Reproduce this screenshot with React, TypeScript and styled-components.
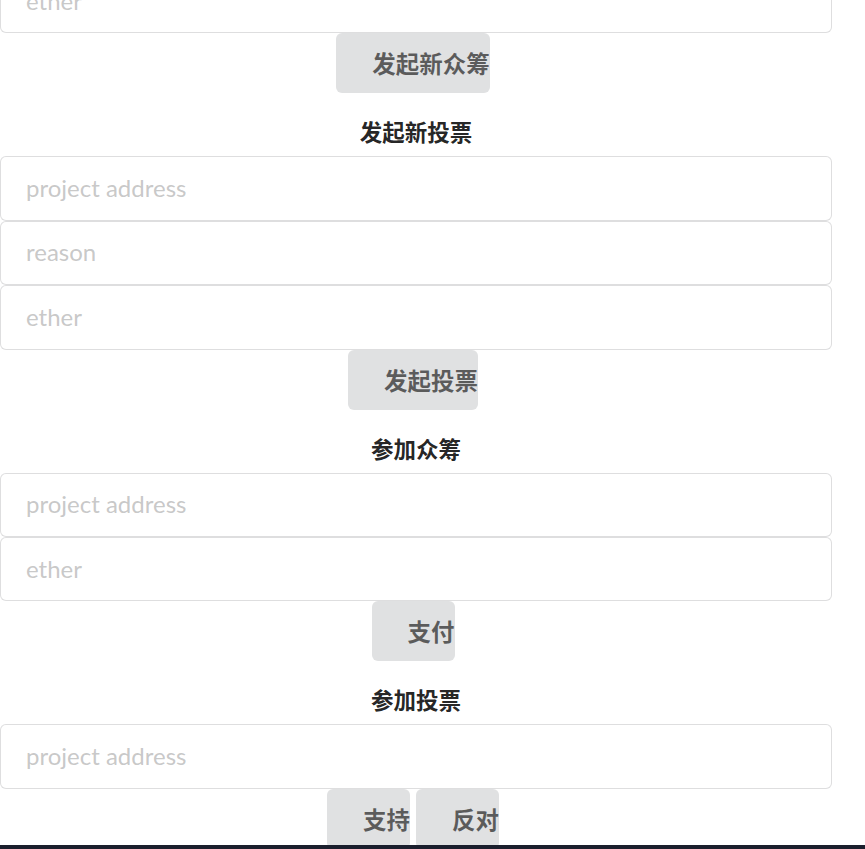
import * as React from 'react';
import styled, { createGlobalStyle } from 'styled-components';

const Global = createGlobalStyle`
    html, body {
        margin: 0;
        padding: 0;
        background: #fff;
        overflow: hidden;
    }
    body {
        font-family: Lato, "Noto Sans CJK SC", sans-serif;
    }
`;

const Page = styled.div`
    width: 832px;
    margin-top: -31px;
`;

const Section = styled.div`
    display: flex;
    flex-direction: column;
`;

const Title = styled.h3`
    margin: 0;
    padding: 22px 0 9px;
    line-height: 32px;
    text-align: center;
    font-family: "Noto Sans CJK SC", "Liberation Sans", sans-serif;
    font-size: 22.5px;
    font-weight: 700;
    color: rgba(0, 0, 0, 0.87);
`;

const Input = styled.input`
    box-sizing: border-box;
    width: 100%;
    height: 64.4px;
    margin: 0;
    padding: 0 21px 2px 25px;
    border: 1px solid rgba(34, 36, 38, 0.15);
    border-radius: 6px;
    outline: none;
    font-family: Lato, "Noto Sans CJK SC", sans-serif;
    font-size: 24px;
    color: rgba(0, 0, 0, 0.87);
    &::placeholder {
        color: rgba(191, 191, 191, 0.87);
    }
`;

const Buttons = styled.div`
    text-align: center;
    font-size: 0;
`;

const Button = styled.button`
    display: inline-block;
    vertical-align: top;
    height: 60px;
    margin: 0 6px 0 0;
    padding: 0 0 0 36px;
    border: none;
    border-radius: 6px;
    background: #e0e1e2;
    color: rgba(0, 0, 0, 0.6);
    font-family: "Noto Sans CJK SC", "Liberation Sans", sans-serif;
    font-size: 23.5px;
    font-weight: 700;
    white-space: nowrap;
`;

const Taskbar = styled.div`
    position: fixed;
    left: 0;
    right: 0;
    bottom: 0;
    height: 4px;
    background: #1b1f2d;
`;

export default (() => {
    return (
        <>
            <Global />
            <Page>
                <Section>
                    <Input placeholder="ether" />
                    <Buttons>
                        <Button>发起新众筹</Button>
                    </Buttons>
                </Section>
                <Section>
                    <Title>发起新投票</Title>
                    <Input placeholder="project address" />
                    <Input placeholder="reason" />
                    <Input placeholder="ether" />
                    <Buttons>
                        <Button>发起投票</Button>
                    </Buttons>
                </Section>
                <Section>
                    <Title>参加众筹</Title>
                    <Input placeholder="project address" />
                    <Input placeholder="ether" />
                    <Buttons>
                        <Button>支付</Button>
                    </Buttons>
                </Section>
                <Section>
                    <Title>参加投票</Title>
                    <Input placeholder="project address" />
                    <Buttons>
                        <Button>支持</Button>
                        <Button>反对</Button>
                    </Buttons>
                </Section>
            </Page>
            <Taskbar />
        </>
    );
}) as AppComponent;

interface props {}
type AppComponent = React.FC<props>;
